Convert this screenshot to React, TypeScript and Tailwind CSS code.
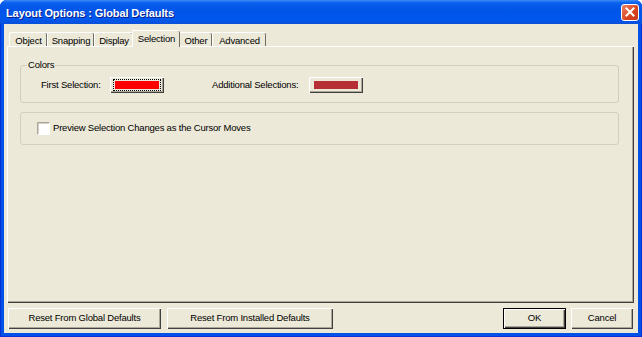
import React from "react";

const tabs = ["Object", "Snapping", "Display", "Selection", "Other", "Advanced"];
const tabWidths: Record<string, string> = {
  Object: "w-[38px]",
  Snapping: "w-[47px]",
  Display: "w-[39px]",
  Selection: "w-[48px]",
  Other: "w-[33px]",
  Advanced: "w-[54px]",
};

const btn =
  "h-[21px] bg-[#ECE9D8] text-black shadow-[inset_1px_1px_#ffffff,inset_-1px_-1px_#404040,inset_-2px_-2px_#ACA899] flex items-center justify-center";

const ColorButton = ({ color, focused }: { color: string; focused?: boolean }) => (
  <div className="w-[54px] h-[16px] bg-[#ECE9D8] shadow-[inset_1px_1px_#ffffff,inset_-1px_-1px_#404040,inset_-2px_-2px_#ACA899] flex items-center justify-center">
    <div className={`p-px ${focused ? "border border-dotted border-black" : "border border-transparent"}`}>
      <div className="w-[44px] h-[8px]" style={{ background: color }} />
    </div>
  </div>
);

export default function App() {
  return (
    <div
      className="w-[642px] h-[337px] flex flex-col bg-[#0052E6] rounded-t-[7px] overflow-hidden shadow-[inset_1px_0_#0831D9,inset_-1px_0_#0831D9,inset_0_-1px_#0831D9]"
      style={{ fontFamily: '"Liberation Sans", Arial, sans-serif' }}
    >
      {/* Title bar */}
      <div className="h-[24px] shrink-0 flex items-center justify-between pl-[6px] pr-[3px] bg-[linear-gradient(#3C8CF8_0%,#0A5FEC_12%,#0054E8_45%,#0058EE_80%,#0A4FD8_100%)]">
        <span className="text-white font-bold text-[11px] tracking-[-0.1px] pt-[2px] [text-shadow:1px_1px_#0A1E8C]">
          Layout Options : Global Defaults
        </span>
        <div className="w-[18px] h-[17px] rounded-[3px] border border-white bg-[linear-gradient(135deg,#EE8466,#D8431E_60%,#C4381A)] flex items-center justify-center">
          <svg width="10" height="10" viewBox="0 0 10 10">
            <path d="M1.5 1.5 L8.5 8.5 M8.5 1.5 L1.5 8.5" stroke="#fff" strokeWidth="2" strokeLinecap="square" />
          </svg>
        </div>
      </div>

      {/* Body */}
      <div className="flex-1 mx-[4px] mb-[4px] bg-[#ECE9D8] flex flex-col text-[9.5px] tracking-[-0.2px] text-black">
        {/* Tabs */}
        <div className="h-[22px] shrink-0 flex items-end pl-[5px]">
          {tabs.map((t) => {
            const active = t === "Selection";
            return (
              <div
                key={t}
                className={`${tabWidths[t]} ${
                  active ? "h-[17px] -mb-px relative z-10 -mx-[1px] pt-[1px]" : "h-[14px]"
                } bg-[#ECE9D8] rounded-t-[2px] border-l border-t border-l-white border-t-white shadow-[inset_-1px_0_#716F64] flex items-start justify-center pt-[1px]`}
              >
                {t}
              </div>
            );
          })}
        </div>

        {/* Panel */}
        <div className="h-[257px] shrink-0 ml-[3px] mr-[4px] shadow-[inset_1px_1px_#ffffff,inset_-1px_-1px_#404040,inset_-2px_-2px_#ACA899] pt-[13px] pl-[13px] pr-[15px] flex flex-col gap-[9px]">
          <fieldset className="h-[44px] border border-[#D0D0BF] rounded-[3px] px-[20px] pb-[5px] m-0">
            <legend className="ml-[-14px] px-[1px] leading-[12px]">Colors</legend>
            <div className="flex items-center h-[20px] mt-[4px]">
              <span className="w-[69px]">First Selection:</span>
              <ColorButton color="#FF0000" focused />
              <span className="ml-[48px] w-[97px]">Additional Selections:</span>
              <ColorButton color="#B52F35" />
            </div>
          </fieldset>
          <div className="h-[33px] border border-[#D0D0BF] rounded-[3px] flex items-center pl-[16px]">
            <div className="w-[13px] h-[13px] bg-white border border-t-[#ACA899] border-l-[#ACA899] border-b-white border-r-white shadow-[inset_1px_1px_#D4D0C8]" />
            <span className="ml-[3px]">Preview Selection Changes as the Cursor Moves</span>
          </div>
        </div>

        {/* Buttons */}
        <div className="flex items-center mt-[5px] pl-[4px] pr-[5px]">
          <div className={`${btn} w-[153px]`}>Reset From Global Defaults</div>
          <div className={`${btn} w-[166px] ml-[6px]`}>Reset From Installed Defaults</div>
          <div className="flex-1" />
          <div className={`${btn} w-[63px] border border-black`}>OK</div>
          <div className={`${btn} w-[62px] ml-[5px]`}>Cancel</div>
        </div>
      </div>
    </div>
  );
}
